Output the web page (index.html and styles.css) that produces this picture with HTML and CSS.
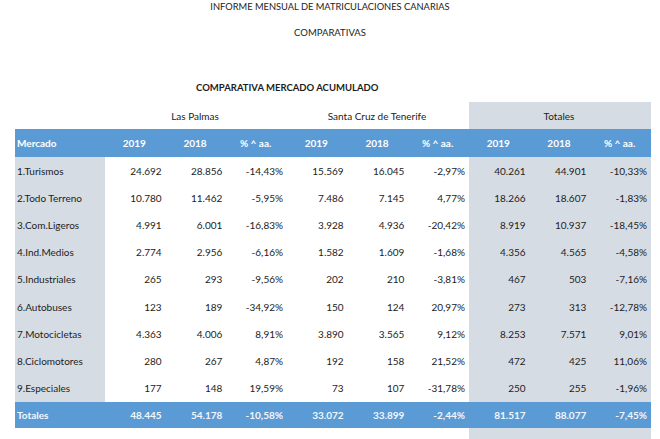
FILE: index.html
```html
<!DOCTYPE html>
<html lang="es">
<head>
<meta charset="utf-8">
<title>Comparativa mercado acumulado</title>
<link rel="stylesheet" href="styles.css">
</head>
<body>
<div class="t1">INFORME MENSUAL DE MATRICULACIONES CANARIAS</div>
<div class="t2">COMPARATIVAS</div>
<div class="t3">COMPARATIVA MERCADO ACUMULADO</div>
<table class="grid">
  <colgroup>
    <col class="c-name">
    <col span="9" class="c-num">
  </colgroup>
  <tr class="r-group">
    <td></td>
    <td colspan="3" class="grp">Las Palmas</td>
    <td colspan="3" class="grp">Santa Cruz de Tenerife</td>
    <td colspan="3" class="grp tot">Totales</td>
  </tr>
  <tr class="r-head">
    <th class="name">Mercado</th>
    <th>2019</th><th>2018</th><th>% ^ aa.</th>
    <th>2019</th><th>2018</th><th>% ^ aa.</th>
    <th>2019</th><th>2018</th><th>% ^ aa.</th>
  </tr>
  <tr class="r-data"><td class="name">1.Turismos</td><td>24.692</td><td>28.856</td><td>-14,43%</td><td>15.569</td><td>16.045</td><td>-2,97%</td><td class="tot">40.261</td><td class="tot">44.901</td><td class="tot">-10,33%</td></tr>
  <tr class="r-data"><td class="name">2.Todo Terreno</td><td>10.780</td><td>11.462</td><td>-5,95%</td><td>7.486</td><td>7.145</td><td>4,77%</td><td class="tot">18.266</td><td class="tot">18.607</td><td class="tot">-1,83%</td></tr>
  <tr class="r-data"><td class="name">3.Com.Ligeros</td><td>4.991</td><td>6.001</td><td>-16,83%</td><td>3.928</td><td>4.936</td><td>-20,42%</td><td class="tot">8.919</td><td class="tot">10.937</td><td class="tot">-18,45%</td></tr>
  <tr class="r-data"><td class="name">4.Ind.Medios</td><td>2.774</td><td>2.956</td><td>-6,16%</td><td>1.582</td><td>1.609</td><td>-1,68%</td><td class="tot">4.356</td><td class="tot">4.565</td><td class="tot">-4,58%</td></tr>
  <tr class="r-data"><td class="name">5.Industriales</td><td>265</td><td>293</td><td>-9,56%</td><td>202</td><td>210</td><td>-3,81%</td><td class="tot">467</td><td class="tot">503</td><td class="tot">-7,16%</td></tr>
  <tr class="r-data"><td class="name">6.Autobuses</td><td>123</td><td>189</td><td>-34,92%</td><td>150</td><td>124</td><td>20,97%</td><td class="tot">273</td><td class="tot">313</td><td class="tot">-12,78%</td></tr>
  <tr class="r-data"><td class="name">7.Motocicletas</td><td>4.363</td><td>4.006</td><td>8,91%</td><td>3.890</td><td>3.565</td><td>9,12%</td><td class="tot">8.253</td><td class="tot">7.571</td><td class="tot">9,01%</td></tr>
  <tr class="r-data"><td class="name">8.Ciclomotores</td><td>280</td><td>267</td><td>4,87%</td><td>192</td><td>158</td><td>21,52%</td><td class="tot">472</td><td class="tot">425</td><td class="tot">11,06%</td></tr>
  <tr class="r-data"><td class="name">9.Especiales</td><td>177</td><td>148</td><td>19,59%</td><td>73</td><td>107</td><td>-31,78%</td><td class="tot">250</td><td class="tot">255</td><td class="tot">-1,96%</td></tr>
  <tr class="r-total">
    <th class="name">Totales</th>
    <th>48.445</th><th>54.178</th><th>-10,58%</th>
    <th>33.072</th><th>33.899</th><th>-2,44%</th>
    <th>81.517</th><th>88.077</th><th>-7,45%</th>
  </tr>
  <tr class="r-tail">
    <td colspan="7"></td>
    <td colspan="3" class="tot"></td>
  </tr>
</table>
</body>
</html>
```

FILE: styles.css
```css
html, body {
  margin: 0;
  padding: 0;
  background: #ffffff;
}

body {
  font-family: Lato, "Open Sans", sans-serif;
  font-size: 10px;
  color: #1c1c1c;
  overflow: hidden;
}

.t1 {
  padding-top: 1px;
  line-height: 12px;
  text-align: center;
  font-size: 9.3px;
}

.t2 {
  margin-top: 14px;
  line-height: 12px;
  text-align: center;
  font-size: 9.5px;
}

.t3 {
  margin-top: 43px;
  line-height: 12px;
  padding-left: 196px;
  font-weight: bold;
  font-size: 9.5px;
}

.grid {
  margin: 8px 0 0 15px;
  width: 636px;
  table-layout: fixed;
  border-collapse: collapse;
  border-spacing: 0;
}

.c-name { width: 90px; }
.c-num { width: 60.667px; }

.grid td,
.grid th {
  padding: 0 4px 0 2px;
  white-space: nowrap;
  overflow: hidden;
}

.r-group { height: 27px; }
.r-group .grp {
  text-align: center;
  font-weight: normal;
}

.r-head { height: 28px; }
.r-head th,
.r-total th {
  background: #5b9bd5;
  color: #ffffff;
  font-weight: bold;
}
.r-head th { text-align: center; }
.r-head th.name,
.r-total th.name { text-align: left; }

.r-data { height: 27.2px; }
.r-data td { text-align: right; }
.r-data td.name {
  text-align: left;
  background: #d6dce4;
}

.r-total { height: 26px; }
.r-total th {
  text-align: right;
  color: #f2f7fc;
}

.r-tail { height: 11px; }

.tot { background: #d6dce4; }
```
